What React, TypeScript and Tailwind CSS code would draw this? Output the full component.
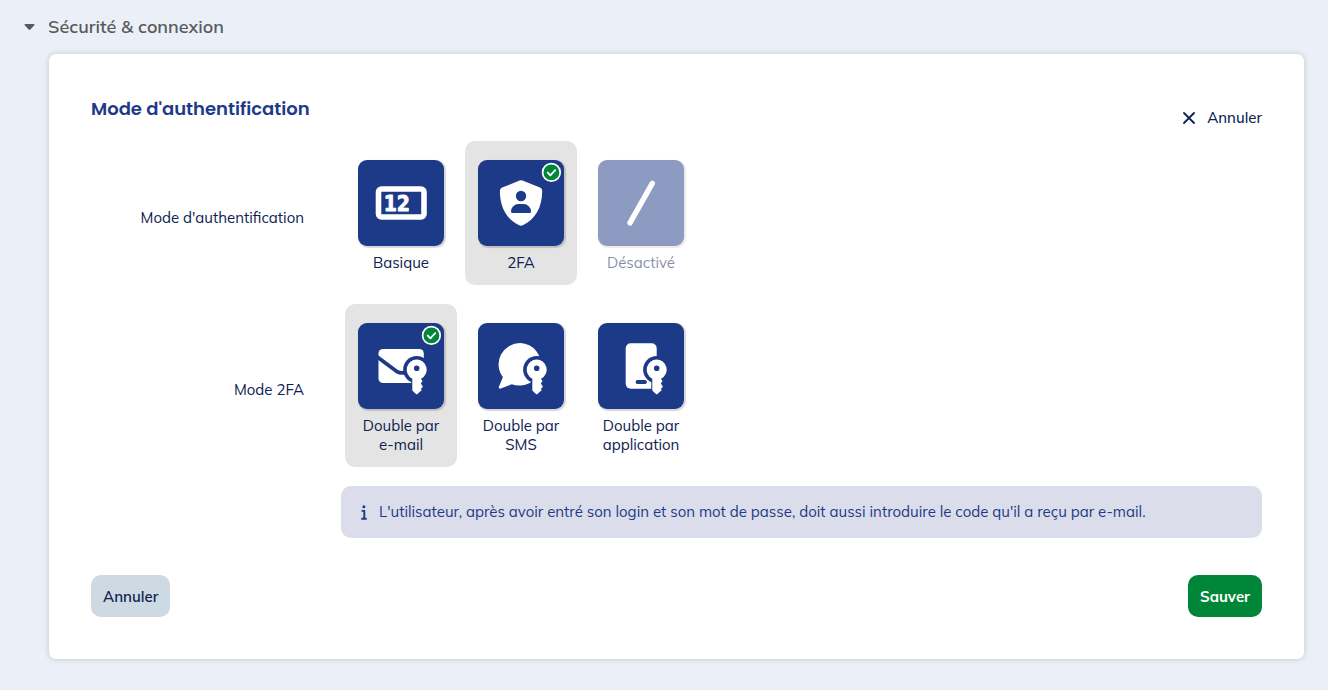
import { useState } from "react";
import type { ReactNode } from "react";

type Option = {
  value: string;
  label: string;
  icon: ReactNode;
  disabled?: boolean;
};

// shared by the three 2FA icons, the blue halo cuts it out of the shape behind
function KeyShape() {
  return (
    <>
      <circle cx="58.7" cy="46.6" r="13.6" fill="#1d3a88" />
      <path d="M53.3 52h12.5v14H53.3z" fill="#1d3a88" />
      <path
        fill="#fff"
        fillRule="evenodd"
        d="M58.7 36.4a10.2 10.2 0 0 1 4.6 19.2v.8l1.3 1.5-1.8 2.6 1.8 2.4v1.3l-1.6 1.6.6 1.4-3.9 3.6a1.4 1.4 0 0 1-2 0l-3.4-3.3V55.7a10.2 10.2 0 0 1 4.4-19.3Zm0 6.1a2.8 2.8 0 1 0 0 5.6 2.8 2.8 0 0 0 0-5.6Z"
      />
    </>
  );
}

const AUTH_MODES: Option[] = [
  {
    value: "basic",
    label: "Basique",
    icon: (
      <>
        <rect x="20.5" y="29" width="45.5" height="28" rx="3" fill="none" stroke="#fff" strokeWidth="5.6" />
        <text
          x="38.8"
          y="51.3"
          textAnchor="middle"
          fill="#fff"
          stroke="#fff"
          strokeWidth=".8"
          strokeLinejoin="round"
          className="font-['DejaVu_Sans_Condensed','DejaVu_Sans',sans-serif] text-[21px] font-bold"
        >
          12
        </text>
      </>
    ),
  },
  {
    value: "2fa",
    label: "2FA",
    icon: (
      <>
        <path
          fill="#fff"
          d="M41.6 20.5a3.4 3.4 0 0 1 2.8 0l17.6 7.1a3.4 3.4 0 0 1 2.2 3.1C64.3 47 57.5 59.5 44.8 65.2a4 4 0 0 1-3.6 0C28.5 59.5 21.8 47 21.9 30.7a3.4 3.4 0 0 1 2.2-3.1Z"
        />
        <circle cx="43" cy="36" r="5.2" fill="#1d3a88" />
        <path fill="#1d3a88" d="M33 51.5a7.5 7.5 0 0 1 7.5-7.5h5a7.5 7.5 0 0 1 7.5 7.5 1.5 1.5 0 0 1-1.5 1.5h-17a1.5 1.5 0 0 1-1.5-1.5Z" />
      </>
    ),
  },
  {
    value: "off",
    label: "Désactivé",
    disabled: true,
    icon: <path d="M54.3 23.4 32 62.8" stroke="#fff" strokeWidth="5.4" strokeLinecap="round" />,
  },
];

const TWO_FA_MODES: Option[] = [
  {
    value: "email",
    label: "Double par e-mail",
    icon: (
      <>
        <rect x="20.5" y="26" width="45.3" height="34" rx="4.5" fill="#fff" />
        <path d="M19 33.8 38.5 48.3q3 2 8.500 1.600" fill="none" stroke="#1d3a88" strokeWidth="3.8" />
        <KeyShape />
      </>
    ),
  },
  {
    value: "sms",
    label: "Double par SMS",
    icon: (
      <>
        <path
          fill="#fff"
          d="M42.3 20a21.6 21.3 0 1 1-8.6 41.2l-11 4.4a1.4 1.4 0 0 1-1.8-1.9l4-9.6A21.6 21.3 0 0 1 42.3 20Z"
        />
        <KeyShape />
      </>
    ),
  },
  {
    value: "app",
    label: "Double par application",
    icon: (
      <>
        <rect x="27.7" y="20.2" width="31" height="45.5" rx="5" fill="#fff" />
        <KeyShape />
        <path d="M39.5 59h7.5" stroke="#1d3a88" strokeWidth="3.8" strokeLinecap="round" />
      </>
    ),
  },
];

function CheckBadge() {
  return (
    <>
      <circle cx="73.4" cy="12.4" r="8.8" fill="#008639" stroke="#fff" strokeWidth="1.7" />
      <path
        d="m69.7 12.6 2.7 2.7 4.8-5.1"
        fill="none"
        stroke="#fff"
        strokeWidth="1.9"
        strokeLinecap="round"
        strokeLinejoin="round"
      />
    </>
  );
}

function TileGroup({
  name,
  title,
  options,
  value,
  onChange,
}: {
  name: string;
  title: string;
  options: Option[];
  value: string;
  onChange: (value: string) => void;
}) {
  return (
    <div
      role="radiogroup"
      aria-labelledby={`${name}-title`}
      className="grid grid-cols-[213px_minmax(0,1fr)] items-center gap-x-[41px]"
    >
      <div id={`${name}-title`} className="pt-[9px] text-right">
        {title}
      </div>
      <div className="flex flex-wrap items-start gap-2">
        {options.map((option) => {
          const selected = option.value === value;
          return (
            <label
              key={option.value}
              className={`relative flex w-28 flex-col items-center gap-[7px] rounded-[10px] px-1 pt-[19px] pb-[13px] text-center leading-[19px] ${
                selected ? "bg-[#e4e4e4]" : ""
              } ${option.disabled ? "opacity-50" : "cursor-pointer"}`}
            >
              <input
                type="radio"
                name={name}
                value={option.value}
                checked={selected}
                disabled={option.disabled}
                onChange={() => onChange(option.value)}
                className="sr-only"
              />
              <svg
                viewBox="0 0 86 86"
                aria-hidden="true"
                className="size-[86px] rounded-[9px] bg-[#1d3a88] shadow-[1px_1px_1px_1px_rgba(0,0,0,0.16)]"
              >
                {option.icon}
                {selected && <CheckBadge />}
              </svg>
              <span className="w-20">{option.label}</span>
            </label>
          );
        })}
      </div>
    </div>
  );
}

export default function App() {
  const [open, setOpen] = useState(true);
  const [authMode, setAuthMode] = useState("2fa");
  const [twoFaMode, setTwoFaMode] = useState("email");

  return (
    <main className="min-h-screen bg-[#ebeff7] px-6 pt-3 pb-[31px] font-['Mulish','Open_Sans',sans-serif] text-[15px] leading-6 text-[#0c2250]">
      <h2>
        <button
          type="button"
          aria-expanded={open}
          onClick={() => setOpen(!open)}
          className="flex h-[30px] items-center gap-[13px] text-lg font-semibold text-[#58595b]"
        >
          <svg viewBox="0 0 11 8" className="h-2 w-[11px]" aria-hidden="true">
            <path fill="currentColor" d="M1.2 1h8.6q1.2.3.4 1.3L6.4 6.5q-.9.9-1.8 0L.8 2.3Q0 1.3 1.2 1Z" />
          </svg>
          Sécurité &amp; connexion
        </button>
      </h2>

      {open && (
        <form
          onSubmit={(e) => e.preventDefault()}
          className="mt-3 ml-[25px] rounded-[7px] bg-white p-[42px] shadow-[0_0_5px_1px_rgba(0,0,0,0.13)]"
        >
          <div className="mb-px flex items-start justify-between">
            <h3 className="font-['Poppins','Inter',sans-serif] text-lg leading-[26px] font-semibold text-[#1d3a88]">
              Mode d'authentification
            </h3>
            <button type="button" className="flex h-11 items-center gap-3 font-medium">
              <svg viewBox="0 0 12 12" className="size-3" aria-hidden="true">
                <path d="m1 1 10 10M11 1 1 11" stroke="currentColor" strokeWidth="1.8" strokeLinecap="round" />
              </svg>
              Annuler
            </button>
          </div>

          <div className="flex flex-col gap-[19px]">
            <TileGroup
              name="auth-mode"
              title="Mode d'authentification"
              options={AUTH_MODES}
              value={authMode}
              onChange={setAuthMode}
            />
            <TileGroup
              name="two-fa-mode"
              title="Mode 2FA"
              options={TWO_FA_MODES}
              value={twoFaMode}
              onChange={setTwoFaMode}
            />
            <div className="ml-[250px] flex items-center gap-3 rounded-[10px] bg-[#dbdeea] px-5 py-[14px] text-[#1d3a88]">
              <svg viewBox="0 0 6 15" className="h-[15px] w-[6px] shrink-0" aria-hidden="true">
                <circle cx="2.9" cy="1.8" r="1.5" fill="currentColor" />
                <path d="M.6 5.9h2.7v7.6M.3 13.8h5.4" fill="none" stroke="currentColor" strokeWidth="1.9" />
              </svg>
              <p>
                L'utilisateur, après avoir entré son login et son mot de passe, doit aussi introduire le code qu'il a
                reçu par e-mail.
              </p>
            </div>
          </div>

          <div className="mt-[37px] flex justify-between">
            <button type="button" className="h-[42px] rounded-[10px] bg-[#cdd9e3] px-3 pt-0.5 font-semibold">
              Annuler
            </button>
            <button type="submit" className="h-[42px] rounded-[10px] bg-[#008639] px-3 pt-0.5 font-bold text-white">
              Sauver
            </button>
          </div>
        </form>
      )}
    </main>
  );
}
